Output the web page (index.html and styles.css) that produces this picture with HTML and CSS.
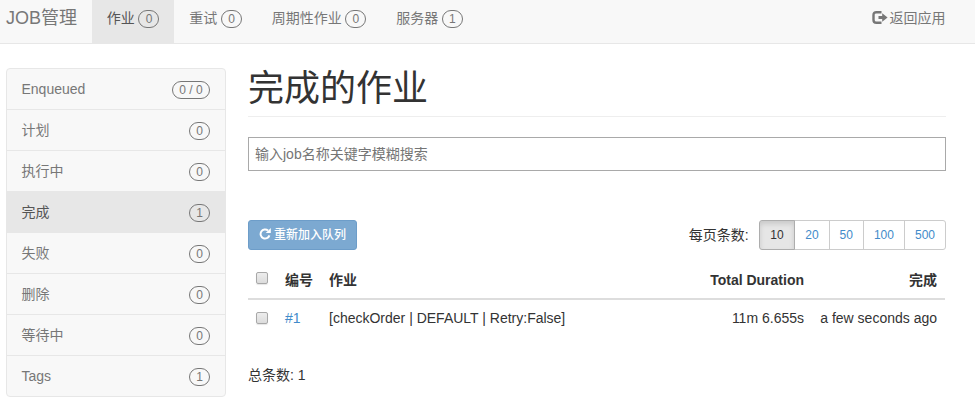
FILE: index.html
```html
<!DOCTYPE html>
<html lang="zh-CN">
<head>
<meta charset="utf-8">
<title>JOB管理</title>
<link rel="stylesheet" href="styles.css">
</head>
<body>
<header class="navbar">
  <a class="brand">JOB管理</a>
  <nav class="nav">
    <a class="nav-item active">作业 <span class="badge">0</span></a>
    <a class="nav-item">重试 <span class="badge">0</span></a>
    <a class="nav-item">周期性作业 <span class="badge">0</span></a>
    <a class="nav-item">服务器 <span class="badge">1</span></a>
  </nav>
  <a class="back">
    <svg class="icon-logout" viewBox="0 0 16 14" aria-hidden="true">
      <path d="M9.5 1.2H4.4Q1.5 1.2 1.5 4.1V8.9Q1.5 11.8 4.4 11.8H9.5" fill="none" stroke="currentColor" stroke-width="2.4"/>
      <path d="M6.5 4.9H10.2V2.2L15.6 6.5L10.2 10.8V8.1H6.5Z" fill="currentColor"/>
    </svg>
    <span>返回应用</span>
  </a>
</header>
<div class="page">
  <aside class="sidebar">
    <a class="side-item"><span>Enqueued</span><span class="badge">0 / 0</span></a>
    <a class="side-item"><span>计划</span><span class="badge">0</span></a>
    <a class="side-item"><span>执行中</span><span class="badge">0</span></a>
    <a class="side-item active"><span>完成</span><span class="badge">1</span></a>
    <a class="side-item"><span>失败</span><span class="badge">0</span></a>
    <a class="side-item"><span>删除</span><span class="badge">0</span></a>
    <a class="side-item"><span>等待中</span><span class="badge">0</span></a>
    <a class="side-item"><span>Tags</span><span class="badge">1</span></a>
  </aside>
  <main class="content">
    <h1>完成的作业</h1>
    <input class="search" type="text" placeholder="输入job名称关键字模糊搜索">
    <div class="toolbar">
      <button class="requeue" type="button">
        <svg class="icon-repeat" viewBox="0 0 13 13" aria-hidden="true">
          <path d="M9.8 2.8A4.9 4.9 0 1 0 11.3 8" fill="none" stroke="currentColor" stroke-width="2.1"/>
          <path d="M12.8 0V5.5H7.3Z" fill="currentColor"/>
        </svg>
        <span>重新加入队列</span>
      </button>
      <div class="per-page">
        <span class="per-label">每页条数:</span>
        <div class="sizes">
          <a class="size active">10</a><a class="size">20</a><a class="size">50</a><a class="size">100</a><a class="size">500</a>
        </div>
      </div>
    </div>
    <table class="jobs">
      <thead>
        <tr><th class="col-check"><input type="checkbox"></th><th class="col-id">编号</th><th>作业</th><th class="col-duration">Total Duration</th><th class="col-done">完成</th></tr>
      </thead>
      <tbody>
        <tr><td><input type="checkbox"></td><td><a class="job-link">#1</a></td><td>[checkOrder | DEFAULT | Retry:False]</td><td class="right">11m 6.655s</td><td class="right">a few seconds ago</td></tr>
      </tbody>
    </table>
    <p class="total">总条数: 1</p>
  </main>
</div>
</body>
</html>
```
FILE: styles.css
```css
* {
  box-sizing: border-box;
}

body {
  margin: 0;
  height: 416px;
  overflow: hidden;
  background: #fff;
  color: #333;
  font: 14px/20px "Liberation Sans", "Noto Sans CJK SC", sans-serif;
}

.navbar {
  display: flex;
  height: 44px;
  padding: 0 29.5px 0 6px;
  background: #f8f8f8;
  border-bottom: 1px solid #e7e7e7;
  color: #777;
}

.brand {
  width: 86px;
  font-size: 18px;
  line-height: 36px;
  white-space: nowrap;
}

.nav {
  display: flex;
  flex: 1;
}

.nav-item {
  display: flex;
  align-items: flex-start;
  gap: 3.8px;
  height: 43px;
  padding: 0 15px 0 14.7px;
  line-height: 36px;
}

.nav-item .badge {
  margin-top: 10px;
}

.nav-item.active {
  background: #e7e7e7;
  color: #555;
}

.badge {
  height: 18px;
  min-width: 21px;
  padding: 0 6px;
  border: 1px solid #777;
  border-radius: 10px;
  color: #777;
  font-size: 12px;
  line-height: 16px;
  text-align: center;
  white-space: nowrap;
}

.back {
  display: flex;
  gap: 2px;
  line-height: 36px;
}

.icon-logout {
  width: 16px;
  height: 14px;
  margin-top: 11px;
}

.page {
  display: flex;
  gap: 22px;
  padding: 24px 29px 0 6px;
}

.sidebar {
  width: 220px;
  height: 329px;
  border: 1px solid #e7e7e7;
  border-radius: 4px;
  background: #f8f8f8;
}

.side-item {
  display: flex;
  justify-content: space-between;
  height: 41px;
  padding: 0 15px 0 14.5px;
  border-bottom: 1px solid #e7e7e7;
  color: #777;
  line-height: 40px;
}

.side-item .badge {
  margin-top: 12px;
}

.side-item:first-child .badge {
  min-width: 38px;
}

.side-item:last-child {
  border-bottom: 0;
}

.side-item.active {
  margin: 0 -1px;
  padding: 0 16px 0 15.5px;
  background: #e7e7e7;
  color: #555;
}

.content {
  flex: 1;
}

h1 {
  height: 49px;
  margin: 0 0 20px;
  border-bottom: 1px solid #eee;
  font-size: 36px;
  font-weight: 400;
  line-height: 42px;
}

.search {
  display: block;
  width: 100%;
  height: 34px;
  padding: 0 6px;
  border: 1px solid #a9a9a9;
  border-radius: 0;
  color: #555;
  font: inherit;
}

.search::placeholder {
  color: #757575;
}

.toolbar {
  display: flex;
  justify-content: space-between;
  margin-top: 49px;
}

.requeue {
  display: flex;
  align-items: center;
  gap: 3px;
  width: 109px;
  height: 30px;
  padding: 0 10px;
  border: 1px solid #6d9dc9;
  border-radius: 3px;
  background: #7ca9d1;
  color: #fff;
  font: 12px/18px "Liberation Sans", "Noto Sans CJK SC", sans-serif;
  font-weight: 500;
  white-space: nowrap;
}

.icon-repeat {
  flex: none;
  width: 12px;
  height: 12px;
  margin-top: -2px;
}

.per-page {
  display: flex;
  gap: 10px;
  line-height: 30px;
}

.sizes {
  display: flex;
}

.size {
  height: 30px;
  margin-left: -1px;
  padding: 0 10px;
  border: 1px solid #ccc;
  color: #428bca;
  font-size: 12px;
  line-height: 28px;
}

.size:first-child {
  margin-left: 0;
  padding: 0 10.6px;
  border-radius: 3px 0 0 3px;
}

.size:last-child {
  border-radius: 0 3px 3px 0;
}

.size.active {
  z-index: 1;
  border-color: #adadad;
  background: #e6e6e6;
  box-shadow: inset 0 3px 5px rgba(0, 0, 0, 0.125);
  color: #333;
}

.jobs {
  width: 697px;
  margin-top: 10px;
  border-collapse: separate;
  border-spacing: 0;
  table-layout: fixed;
}

.jobs th,
.jobs td {
  height: 38px;
  padding: 0 8px;
  text-align: left;
  white-space: nowrap;
}

.jobs td {
  padding-bottom: 2px;
}

.jobs th {
  height: 40px;
  padding-top: 2px;
  border-bottom: 2px solid #ddd;
}

.jobs .col-check {
  width: 29px;
}

.jobs .col-id {
  width: 44px;
}

.jobs .col-duration {
  width: 133px;
  text-align: right;
}

.jobs .col-done {
  width: 133px;
  text-align: right;
}

.jobs .right {
  text-align: right;
}

.jobs input {
  display: block;
  width: 12px;
  height: 12px;
  margin: -4px 0 0;
  appearance: none;
  border: 1px solid #a8a8a8;
  border-radius: 2px;
  background: linear-gradient(#ededed, #dcdcdc);
  box-shadow: 0 1px 1px rgba(0, 0, 0, 0.1);
}

.jobs td input {
  margin-top: 0;
}

.job-link {
  color: #428bca;
}

.total {
  margin: 27px 0 0;
}
```
